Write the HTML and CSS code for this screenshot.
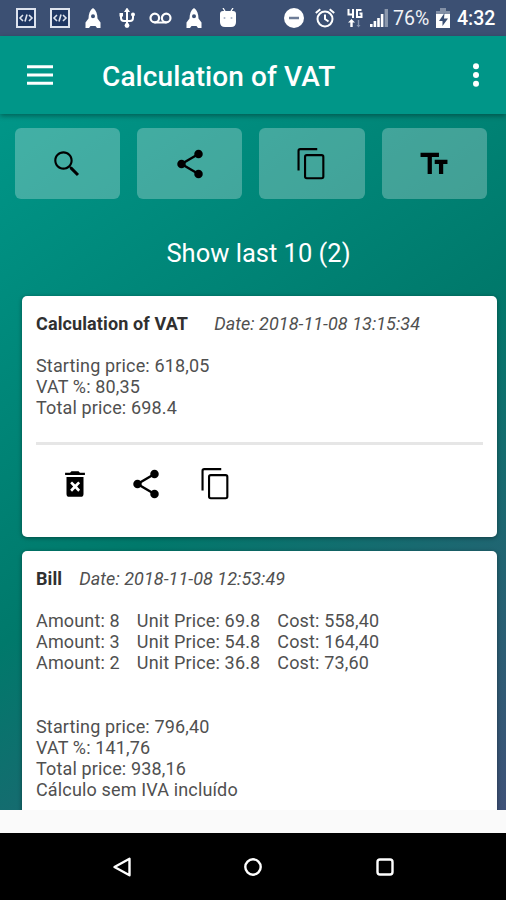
FILE: index.html
```html
<!DOCTYPE html>
<html lang="en">
<head>
    <meta charset="UTF-8">
    <meta name="viewport" content="width=device-width, initial-scale=1.0">
    <title>Calculation of VAT</title>
    <link rel="stylesheet" href="styles.css">
</head>
<body>
    <!-- Shared icons -->
    <svg class="sprite" width="0" height="0">
        <symbol id="code" viewBox="0 0 20 20">
            <path d="M1 1h18v18H1z" fill="#1f3763" stroke="#dde3ee" stroke-width="2"/>
            <path d="M7 7l-3 3 3 3M13 7l3 3-3 3M11 6.500l-2 7" fill="none" stroke="#dde3ee" stroke-width="1.600"/>
        </symbol>
        <symbol id="rocket" viewBox="0 0 20 20">
            <path fill-rule="evenodd" d="M10 0C7 2 5.500 6 5.500 10.500L2.500 14.500v5.500h3.500l1.500-2h5l1.500 2h3.500v-5.500l-3-4C14.500 6 13 2 10 0zM10 6.200a2 2 0 1 1 0 4 2 2 0 0 1 0-4z"/>
        </symbol>
        <symbol id="share" viewBox="0 0 24 24">
            <path d="M18 5L6 12l12 7" fill="none" stroke="currentColor" stroke-width="1.700"/>
            <circle cx="18" cy="5" r="3"/>
            <circle cx="6" cy="12" r="3"/>
            <circle cx="18" cy="19" r="3"/>
        </symbol>
        <symbol id="copy" viewBox="0 0 24 24">
            <path d="M2.500 16.500V2.700q0-1.200 1.200-1.200h12M8.300 5.700h10.500q1.200 0 1.200 1.200v14q0 1.200-1.200 1.200H8.300q-1.200 0-1.200-1.200v-14q0-1.200 1.200-1.200z" fill="none" stroke="currentColor" stroke-width="1.500"/>
        </symbol>
    </svg>

    <div class="status-bar">
        <div class="notifications">
            <svg class="status-icon"><use href="#code"/></svg>
            <svg class="status-icon"><use href="#code"/></svg>
            <svg class="status-icon"><use href="#rocket"/></svg>
            <svg class="status-icon" viewBox="0 0 20 20">
                <path d="M10 2v16M4 6v4q0 3 3 3h6q3 0 3-3V6" fill="none" stroke="currentColor" stroke-width="2"/>
                <path d="M10 -.5l3 4.500H7zM2.500 5h3.500v3.500H2.500z"/>
                <circle cx="16" cy="6.500" r="2"/>
                <circle cx="10" cy="17.500" r="2.400"/>
            </svg>
            <svg class="status-icon wide" viewBox="0 0 23 20">
                <path d="M5.500 14.500h12" stroke="currentColor" stroke-width="2"/>
                <circle cx="5.800" cy="10" r="4.300" fill="none" stroke="currentColor" stroke-width="2.200"/>
                <circle cx="17.200" cy="10" r="4.300" fill="none" stroke="currentColor" stroke-width="2.200"/>
            </svg>
            <svg class="status-icon"><use href="#rocket"/></svg>
            <svg class="status-icon" viewBox="0 0 20 20">
                <path d="M5 0l2.500 4M15 0l-2.500 4" stroke="currentColor" stroke-width="1.300"/>
                <path d="M2 6q0-3 3-3h10q3 0 3 3v8q0 5-5 5H7q-5 0-5-5z"/>
                <circle cx="6.500" cy="10" r="1" fill="#a8b3c6"/>
                <circle cx="13.500" cy="10" r="1" fill="#a8b3c6"/>
            </svg>
        </div>
        <div class="system">
            <svg class="status-icon" viewBox="0 0 20 20">
                <circle cx="10" cy="10" r="10"/>
                <path d="M5 10h10" stroke="#6d7c96" stroke-width="2.500"/>
            </svg>
            <svg class="status-icon" viewBox="0 0 20 20">
                <g fill="none" stroke="currentColor" stroke-width="2">
                    <circle cx="10" cy="11" r="7.500"/>
                    <path d="M10 6.500V11l3.500 2.500M.8 5L5.300 1.200M19.200 5l-4.500-3.800"/>
                </g>
            </svg>
            <svg class="network-icon" viewBox="0 0 16 20">
                <path d="M1.500 1v5.500h5.500M6 1v9M14.500 2H10v7h4.500V5.500h-2" fill="none" stroke="currentColor" stroke-width="2"/>
                <path d="M4.500 11L1 14.500h2.300V19h2.400v-4.500H8z"/>
                <path d="M11.500 19.500L9.500 17h1.300v-5h1.400v5h1.300z" fill="#8594ae"/>
            </svg>
            <svg class="signal-icon" viewBox="0 0 18 18">
                <path d="M0 18v-3h2.600v3zM3.600 18v-6h2.600v6zM7.200 18V9h2.600v9zM10.800 18V5h2.600v13z"/>
                <path d="M14.600 18V0H18v18z" fill="#8b98ad"/>
            </svg>
            <span class="battery-level">76%</span>
            <svg class="battery-icon" viewBox="0 0 14 20">
                <path d="M0 3h4V0h6v3h4v4H0z" fill="#8390a6"/>
                <path d="M0 6h14v14H0z"/>
                <path d="M8.500 5L3 13h3.500v5L12 10.500H8z" fill="#3b5074"/>
            </svg>
            <span class="clock">4:32</span>
        </div>
    </div>

    <header class="toolbar">
        <svg class="menu-icon" viewBox="0 0 26 20">
            <path d="M0 1.700h26M0 10h26M0 18.300h26" stroke="currentColor" stroke-width="3"/>
        </svg>
        <h1>Calculation of VAT</h1>
        <svg class="more-icon" viewBox="0 0 8 24">
            <circle cx="4" cy="3.200" r="3"/>
            <circle cx="4" cy="12" r="3"/>
            <circle cx="4" cy="20.800" r="3"/>
        </svg>
    </header>

    <main>
        <div class="actions">
            <button class="action">
                <svg class="icon" viewBox="0 0 24 24"><path d="M15.500 14h-.79l-.28-.27C15.410 12.590 16 11.110 16 9.500 16 5.910 13.090 3 9.500 3S3 5.910 3 9.500 5.910 16 9.500 16c1.610 0 3.090-.59 4.230-1.570l.27.28v.79l5 4.990L20.490 19l-4.990-5zm-6 .5c-2.760 0-5-2.240-5-5s2.240-5 5-5 5 2.240 5 5-2.240 5-5 5z"/></svg>
            </button>
            <button class="action">
                <svg class="icon"><use href="#share"/></svg>
            </button>
            <button class="action">
                <svg class="icon"><use href="#copy"/></svg>
            </button>
            <button class="action">
                <svg class="icon" viewBox="0 0 24 24"><path d="M2.500 4v3h5v12h3V7h5V4h-13zm19 5h-9v3h3v7h3v-7h3V9z"/></svg>
            </button>
        </div>

        <h2>Show last 10 (2)</h2>

        <section class="card">
            <p class="card-title"><b>Calculation of VAT</b><i class="date date-far">Date: 2018-11-08 13:15:34</i></p>
            <p>Starting price: 618,05</p>
            <p>VAT %: 80,35</p>
            <p>Total price: 698.4</p>
            <div class="card-actions">
                <svg class="icon" viewBox="0 0 24 24">
                    <path fill-rule="evenodd" d="M6 7h12v12q0 2-2 2H8q-2 0-2-2zM19 4h-3.500l-1-1h-5l-1 1H5v1.700h14zM9.900 10.200L8.600 11.500l2.100 2.300-2.100 2.300 1.300 1.300 2.200-2.200 2.200 2.200 1.300-1.300-2.100-2.300 2.100-2.300-1.300-1.300-2.200 2.200z"/>
                </svg>
                <svg class="icon"><use href="#share"/></svg>
                <svg class="icon"><use href="#copy"/></svg>
            </div>
        </section>

        <section class="card">
            <p class="card-title"><b>Bill</b><i class="date">Date: 2018-11-08 12:53:49</i></p>
            <div class="items">
                <span>Amount: 8</span><span>Unit Price: 69.8</span><span>Cost: 558,40</span>
                <span>Amount: 3</span><span>Unit Price: 54.8</span><span>Cost: 164,40</span>
                <span>Amount: 2</span><span>Unit Price: 36.8</span><span>Cost: 73,60</span>
            </div>
            <p>Starting price: 796,40</p>
            <p>VAT %: 141,76</p>
            <p>Total price: 938,16</p>
            <p>Cálculo sem IVA incluído</p>
        </section>
    </main>

    <nav class="nav-bar">
        <svg class="nav-icon" viewBox="0 0 20 20"><path d="M17.500 1.800v16.400L2.500 10z"/></svg>
        <svg class="nav-icon" viewBox="0 0 20 20"><circle cx="10" cy="10" r="7.700"/></svg>
        <svg class="nav-icon" viewBox="0 0 20 20"><rect x="2.500" y="2.500" width="15" height="15" rx="2.500"/></svg>
    </nav>
</body>
</html>
```

FILE: styles.css
```css
* {
    box-sizing: border-box;
    margin: 0;
    padding: 0;
}

body {
    display: flex;
    flex-direction: column;
    height: 900px;
    overflow: hidden;
    font-family: Roboto, sans-serif;
    background-color: #fafafa;
    color: #505050;
}

svg {
    display: block;
    flex: none;
    fill: currentColor;
}

.sprite {
    position: absolute;
}

/* Status bar */
.status-bar {
    display: flex;
    flex: none;
    justify-content: space-between;
    align-items: center;
    height: 36px;
    padding: 0 11px 0 16px;
    background-color: #3c5073;
    color: white;
}

.notifications,
.system {
    display: flex;
    align-items: center;
}

.notifications {
    gap: 13.700px;
}

.status-icon {
    width: 20px;
    height: 20px;
}

.wide {
    width: 23px;
    margin: 0 -1.500px;
}

.network-icon {
    width: 16px;
    height: 20px;
    margin: 0 7px 0 12px;
}

.system .status-icon + .status-icon {
    margin-left: 11px;
}

.signal-icon {
    width: 18px;
    height: 18px;
    margin-right: 5px;
}

.battery-level {
    width: 37px;
    margin: 1px 6px 0 0;
    font-size: 19.500px;
    color: #f0f2f6;
}

.battery-icon {
    width: 14px;
    height: 20px;
    margin-right: 7px;
}

.clock {
    width: 38px;
    margin-top: 1px;
    font-size: 19.500px;
    font-weight: 500;
}

/* App bar */
.toolbar {
    position: relative;
    display: flex;
    flex: none;
    align-items: center;
    height: 78px;
    padding: 0 26px 0 27px;
    background-color: #009688;
    color: white;
    box-shadow: 0 2px 5px rgba(0, 0, 0, 0.35);
}

.menu-icon {
    width: 26px;
    height: 20px;
}

.toolbar h1 {
    flex: 1;
    margin: 3px 0 0 49px;
    font-size: 28px;
    font-weight: 500;
    letter-spacing: 0.100px;
}

.more-icon {
    width: 8px;
    height: 24px;
}

/* Content */
main {
    height: 696px;
    flex: none;
    padding: 14px 9px 0 22px;
    overflow: hidden;
    background: linear-gradient(144deg, #009688, #00796b 50%, #3f5178);
}

.actions {
    display: flex;
    gap: 17px;
    margin: 0 10px 0 -7.500px;
}

.action {
    display: flex;
    flex: 1;
    justify-content: center;
    align-items: center;
    height: 71px;
    border: none;
    border-radius: 6px;
    background-color: rgba(255, 255, 255, 0.26);
    color: black;
}

.icon {
    width: 34px;
    height: 34px;
}

h2 {
    margin: 39px 2px 27px 0;
    font-size: 25.500px;
    font-weight: 400;
    line-height: 31px;
    text-align: center;
    color: white;
}

.card {
    height: 241px;
    margin-bottom: 14px;
    padding: 17px 14px;
    border-radius: 5px;
    background-color: white;
    box-shadow: 0 1px 4px rgba(0, 0, 0, 0.4);
    font-size: 18px;
    line-height: 21.100px;
    letter-spacing: 0.150px;
}

.card + .card {
    height: 400px;
}

.card-title {
    margin-bottom: 21.100px;
    letter-spacing: 0.050px;
}

.card-title b {
    font-weight: 700;
    letter-spacing: 0.120px;
    color: #303030;
}

.date {
    margin-left: 17px;
}

.date-far {
    margin-left: 26px;
}

.card-actions {
    display: flex;
    gap: 36.500px;
    margin-top: 23.500px;
    padding: 22px 22px 0;
    border-top: 3px solid #e6e6e6;
    color: black;
}

.items {
    display: grid;
    grid-template-columns: max-content max-content max-content;
    column-gap: 17px;
    margin-bottom: 42.200px;
}

/* Android navigation */
.nav-bar {
    display: flex;
    flex: none;
    justify-content: center;
    align-items: center;
    gap: 111.500px;
    height: 67px;
    margin-top: 23px;
    background-color: black;
}

.nav-icon {
    width: 20px;
    height: 20px;
    fill: none;
    stroke: white;
    stroke-width: 2.400;
    stroke-linejoin: round;
}
```
